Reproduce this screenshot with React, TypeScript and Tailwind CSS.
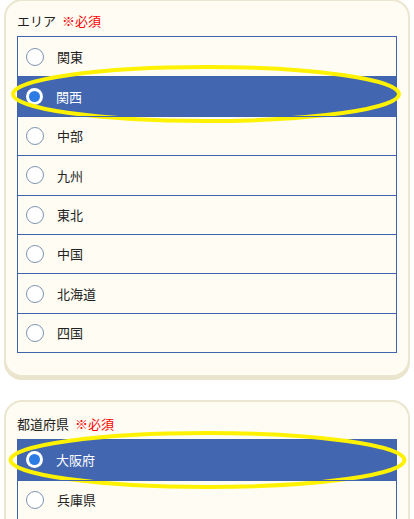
const AREAS = ['関東', '関西', '中部', '九州', '東北', '中国', '北海道', '四国']
const PREFS = ['大阪府', '兵庫県', '京都府', '奈良県']

type Mark = { cx: number; cy: number; rx: number; ry: number }

function Radio({ checked }: { checked: boolean }) {
    if (checked) {
        return (
            <span className="w-[17px] h-[17px] rounded-full bg-white flex items-center justify-center shrink-0">
                <span className="w-[11px] h-[11px] rounded-full bg-[#2d7be5]" />
            </span>
        )
    }
    return <span className="w-[18px] h-[18px] rounded-full border-[1.5px] border-[#7d94b2] bg-white shrink-0" />
}

function OptionList({ items, selected, mark }: { items: string[]; selected: string; mark: Mark }) {
    return (
        <div className="border border-[#3f64ad]">
            {items.map((label, i) => {
                const on = label === selected
                return (
                    <div
                        key={label}
                        className={`relative h-[39.4px] flex items-center gap-[13px] pl-[8px] text-[13px] ${i > 0 ? 'border-t border-[#3f64ad]' : ''} ${on ? 'bg-[#4267b0] text-white' : 'text-[#222]'}`}
                    >
                        <Radio checked={on} />
                        <span>{label}</span>
                        {on && (
                            <svg className="absolute left-0 top-0 w-full h-full overflow-visible pointer-events-none">
                                <ellipse cx={mark.cx} cy={mark.cy} rx={mark.rx} ry={mark.ry} fill="none" stroke="#fff200" strokeWidth={4} />
                            </svg>
                        )}
                    </div>
                )
            })}
        </div>
    )
}

function Card({ title, children, className }: { title: string; children: React.ReactNode; className?: string }) {
    return (
        <section className={`bg-[#fffcf3] border-2 border-[#ebe6cf] rounded-[18px] shadow-[0_3px_0_#e9e4cb] px-[11px] pb-[22px] ${className ?? ''}`}>
            <h3 className="text-[13px] leading-[16px] text-[#222] mb-[7px]">
                {title}<span className="ml-[6px] text-[#ff0000] font-normal">※必須</span>
            </h3>
            {children}
        </section>
    )
}

export default function App() {
    return (
        <div className="min-h-screen bg-white px-[4px] pb-8 font-['Noto_Sans_CJK_JP','Noto_Sans',sans-serif]">
            <Card title="エリア" className="pt-[12px] -mt-[1px]">
                <OptionList items={AREAS} selected="関西" mark={{ cx: 188, cy: 17, rx: 193, ry: 27 }} />
            </Card>

            <Card title="都道府県" className="mt-[23px] pt-[14px]">
                <OptionList items={PREFS} selected="大阪府" mark={{ cx: 189.5, cy: 20, rx: 197, ry: 27 }} />
            </Card>
        </div>
    )
}
